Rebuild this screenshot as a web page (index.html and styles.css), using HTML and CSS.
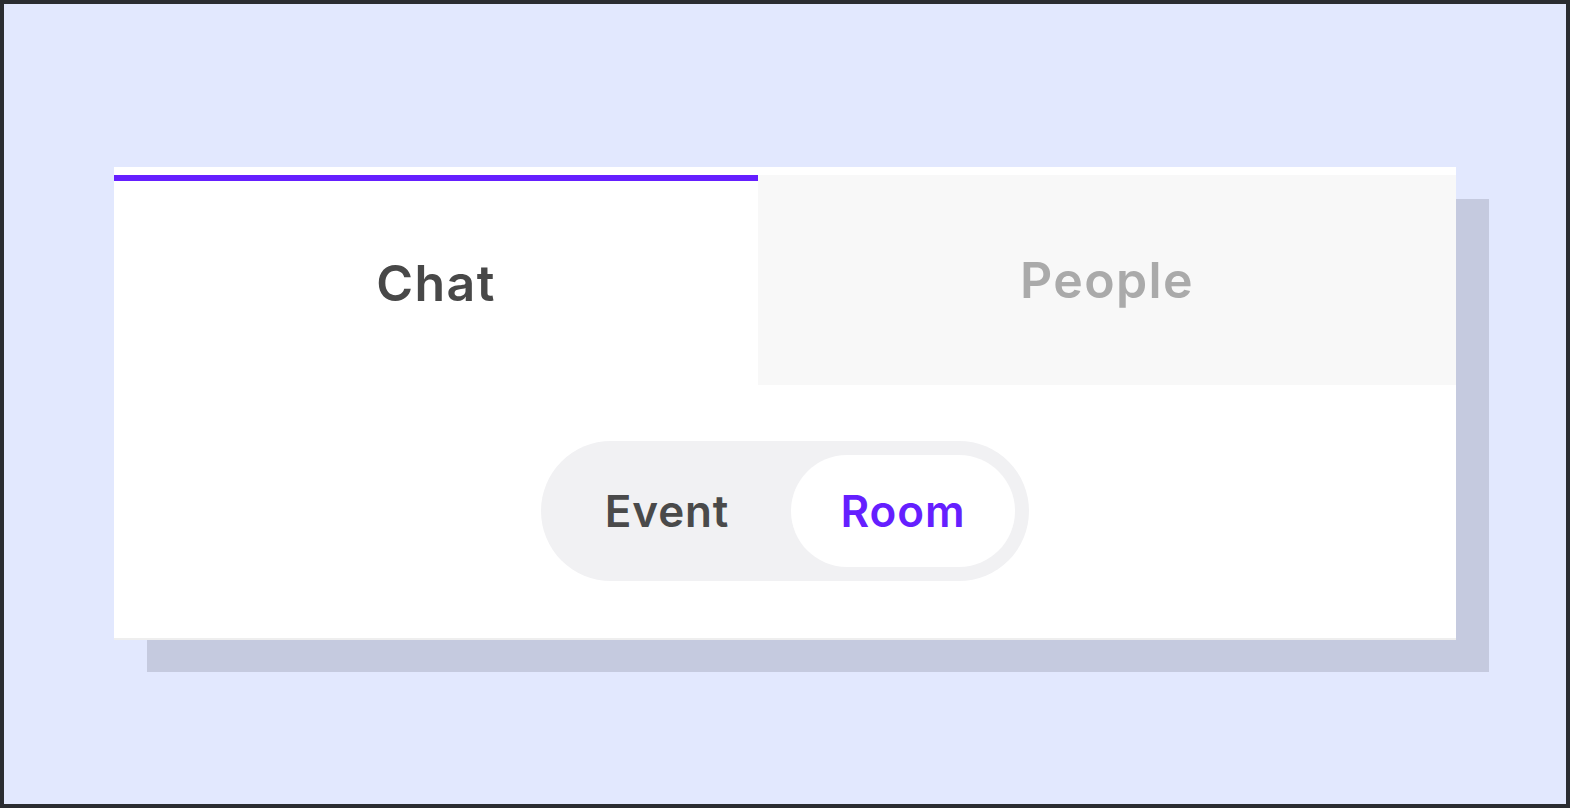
FILE: index.html
```html
<!DOCTYPE html>
<html lang="en">
<head>
    <meta charset="UTF-8">
    <meta name="viewport" content="width=device-width, initial-scale=1.0">
    <title>Chat tabs</title>
    <link rel="stylesheet" href="styles.css">
</head>
<body>
    <div class="frame">
        <div class="card">
            <div class="tabs">
                <div class="tab active">Chat</div>
                <div class="tab">People</div>
            </div>
            <div class="card-body">
                <div class="switch">
                    <button class="switch-option">Event</button>
                    <button class="switch-option selected">Room</button>
                </div>
            </div>
        </div>
    </div>
</body>
</html>
```

FILE: styles.css
```css
html, body {
    margin: 0;
    padding: 0;
}
body {
    font-family: Inter, Lato, sans-serif;
}
.frame {
    box-sizing: border-box;
    width: 1570px;
    height: 808px;
    border: 4px solid #2a2c31;
    background-color: #e2e8fe;
    padding: 163px 0 0 110px;
}
.card {
    width: 1342px;
    background-color: #fff;
    padding-top: 8px;
    border-bottom: 2px solid #eeeeee;
    box-shadow: 33px 32px 0 #c5cadf;
}
.tabs {
    display: flex;
    height: 210px;
}
.tab {
    flex: 1;
    display: flex;
    align-items: center;
    justify-content: center;
    background-color: #f8f8f8;
    color: #aaaaaa;
    font-size: 50px;
    font-weight: 560;
    letter-spacing: 1.4px;
}
.tab.active {
    flex: 0 0 644px;
    box-sizing: border-box;
    border-top: 6px solid #651fff;
    background-color: #fff;
    color: #484848;
}
.card-body {
    display: flex;
    justify-content: center;
    padding: 56px 0 57px;
}
.switch {
    display: flex;
    gap: 12px;
    padding: 14px;
    background-color: #f1f1f3;
    border-radius: 70px;
}
.switch-option {
    width: 224px;
    height: 112px;
    border: none;
    border-radius: 56px;
    background: transparent;
    font-family: inherit;
    font-size: 44px;
    font-weight: 560;
    letter-spacing: 0.9px;
    color: #4a4a4a;
    cursor: pointer;
}
.switch-option.selected {
    background-color: #fff;
    color: #651fff;
}
```
